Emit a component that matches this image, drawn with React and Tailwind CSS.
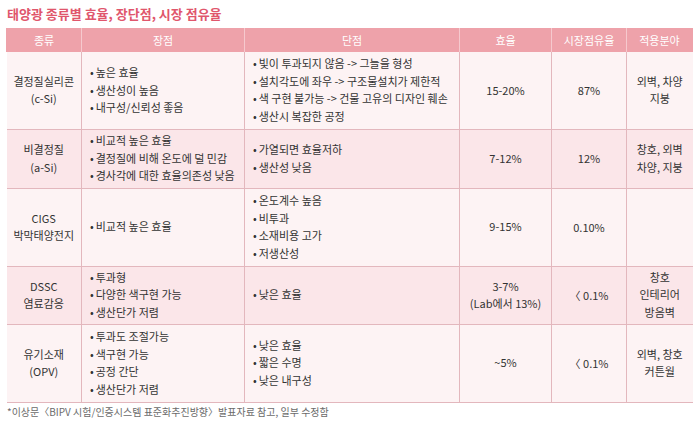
import React from "react"

const rows = [
  {
    kind: ["결정질실리콘", "(c-Si)"],
    pros: ["높은 효율", "생산성이 높음", "내구성/신뢰성 좋음"],
    cons: ["빛이 투과되지 않음 -> 그늘을 형성", "설치각도에 좌우 -> 구조물설치가 제한적", "색 구현 불가능 -> 건물 고유의 디자인 훼손", "생산시 복잡한 공정"],
    eff: ["15-20%"],
    share: "87%",
    use: ["외벽, 차양", "지붕"],
    h: "h-[77px]",
    bg: "bg-[#fdf3f4]",
  },
  {
    kind: ["비결정질", "(a-Si)"],
    pros: ["비교적 높은 효율", "결정질에 비해 온도에 덜 민감", "경사각에 대한 효율의존성 낮음"],
    cons: ["가열되면 효율저하", "생산성 낮음"],
    eff: ["7-12%"],
    share: "12%",
    use: ["창호, 외벽", "차양, 지붕"],
    h: "h-[59px]",
    bg: "bg-[#fbe6e9]",
  },
  {
    kind: ["CIGS", "박막태양전지"],
    pros: ["비교적 높은 효율"],
    cons: ["온도계수 높음", "비투과", "소재비용 고가", "저생산성"],
    eff: ["9-15%"],
    share: "0.10%",
    use: [],
    h: "h-[78px]",
    bg: "bg-[#fdf3f4]",
  },
  {
    kind: ["DSSC", "염료감응"],
    pros: ["투과형", "다양한 색구현 가능", "생산단가 저렴"],
    cons: ["낮은 효율"],
    eff: ["3-7%", "(Lab에서 13%)"],
    share: "〈 0.1%",
    use: ["창호", "인테리어", "방음벽"],
    h: "h-[58px]",
    bg: "bg-[#fbe6e9]",
  },
  {
    kind: ["유기소재", "(OPV)"],
    pros: ["투과도 조절가능", "색구현 가능", "공정 간단", "생산단가 저렴"],
    cons: ["낮은 효율", "짧은 수명", "낮은 내구성"],
    eff: ["~5%"],
    share: "〈 0.1%",
    use: ["외벽, 창호", "커튼월"],
    h: "h-[78px]",
    bg: "bg-[#fdf3f4]",
  },
]

function Bullets({ items }) {
  return (
    <ul className="flex flex-col">
      {items.map((t, i) => (
        <li key={i} className="leading-[17.5px]">
          <span className="mr-[2px]">•</span>
          {t}
        </li>
      ))}
    </ul>
  )
}

function Lines({ items }) {
  return items.map((t, i) => (
    <div key={i} className="leading-[17.5px]">
      {t}
    </div>
  ))
}

export default function App() {
  const cell = "border-x border-[#e3b7bd] align-middle"
  return (
    <div className="w-[699px] h-[427px] bg-white text-[#333333] text-[11px] font-['Noto_Sans_CJK_KR','Noto_Sans',sans-serif]">
      <h1 className="pl-[7px] pt-[4px] h-[28px] text-[13px] font-bold text-[#e0566c]">
        태양광 종류별 효율, 장단점, 시장 점유율
      </h1>
      <table className="ml-[6px] w-[686px] border-collapse table-fixed">
        <colgroup>
          <col className="w-[75px]" />
          <col className="w-[163px]" />
          <col className="w-[215px]" />
          <col className="w-[92px]" />
          <col className="w-[75px]" />
          <col className="w-[66px]" />
        </colgroup>
        <thead>
          <tr className="h-[24px] bg-[#eea2aa] text-white text-[11px]">
            {["종류", "장점", "단점", "효율", "시장점유율", "적용분야"].map((h, i) => (
              <th key={i} className="font-normal border-x border-[#f6c9ce] first:border-l-[#eea2aa] last:border-r-[#eea2aa]">
                {h}
              </th>
            ))}
          </tr>
        </thead>
        <tbody>
          {rows.map((r, i) => (
            <tr key={i} className={`${r.h} ${r.bg} border-b border-[#e3b7bd]`}>
              <td className={`${cell} border-l-0 text-center`}>
                <Lines items={r.kind} />
              </td>
              <td className={`${cell} pl-[8px]`}>
                <Bullets items={r.pros} />
              </td>
              <td className={`${cell} pl-[8px]`}>
                <Bullets items={r.cons} />
              </td>
              <td className={`${cell} text-center`}>
                <Lines items={r.eff} />
              </td>
              <td className={`${cell} text-center`}>{r.share}</td>
              <td className={`${cell} border-r-0 text-center`}>
                <Lines items={r.use} />
              </td>
            </tr>
          ))}
        </tbody>
      </table>
      <p className="pl-[7px] pt-[1px] text-[10px] text-[#6b6b6b]">
        *이상문〈BIPV 시험/인증시스템 표준화추진방향〉발표자료 참고, 일부 수정함
      </p>
    </div>
  )
}
